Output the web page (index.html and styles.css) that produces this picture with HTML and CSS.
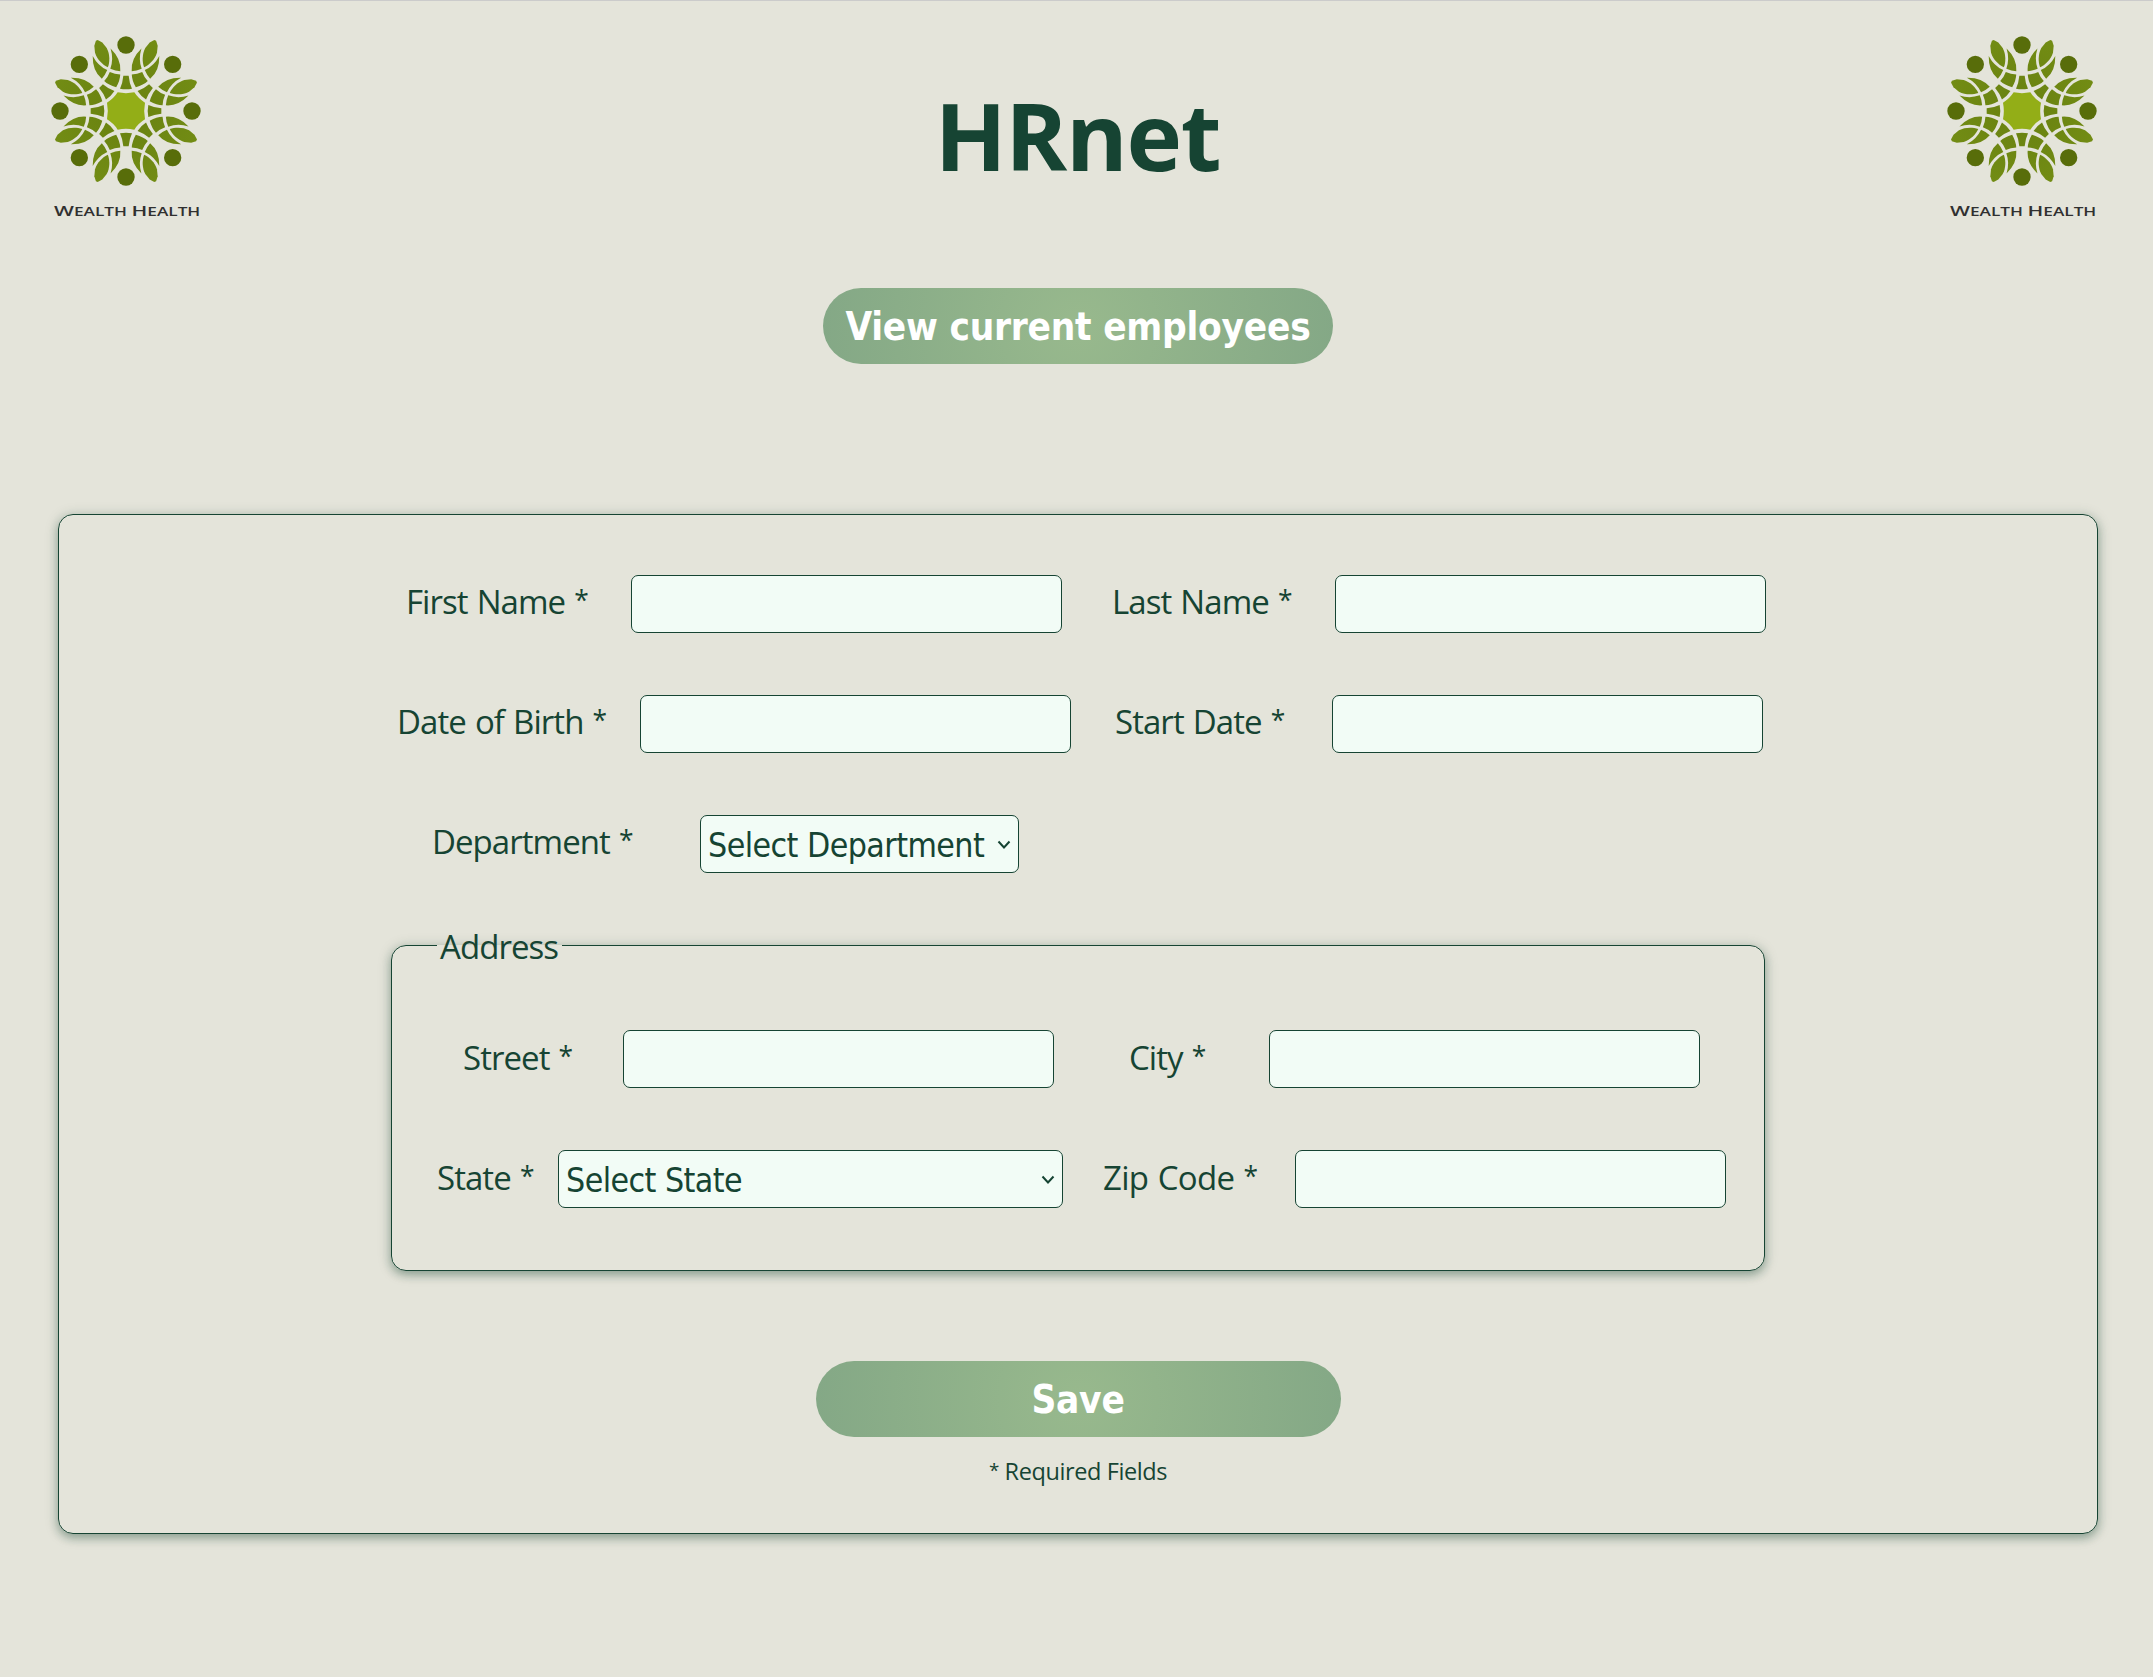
FILE: index.html
```html
<!DOCTYPE html>
<html lang="en">
<head>
<meta charset="utf-8">
<title>HRnet</title>
<link rel="stylesheet" href="styles.css">
</head>
<body>
<svg class="sprite" aria-hidden="true">
  <defs>
    <radialGradient id="leaf-fill" gradientUnits="userSpaceOnUse" cx="0" cy="0" r="230">
      <stop offset="0.3" stop-color="#6b8411"/>
      <stop offset="1" stop-color="#728c14"/>
    </radialGradient>
    <g id="sector">
      <circle cx="0" cy="-198" r="26" fill="#586d0a"/>
      <path d="M-8-106H8Q10-84 18-67Q0-63-18-67Q-10-84-8-106Z"/>
      <g transform="rotate(-22.5)">
        <path d="M0-142C12-155 21-176 19-197L13-217L3-229H-3L-13-217L-19-197C-21-176-12-155 0-142Z"/>
        <path d="M29-191Q26-158 5-135Q17-123 30-117Q47-150 29-191Z"/>
        <path d="M-29-191Q-26-158-5-135Q-17-123-30-117Q-47-150-29-191Z"/>
        <path d="M0-127Q11-115 26-108Q19-92 0-77Q-19-92-26-108Q-11-115 0-127Z"/>
      </g>
    </g>
    <symbol id="logo" viewBox="0 0 480 570">
      <g transform="translate(240 240)" fill="url(#leaf-fill)">
        <use href="#sector"/>
        <use href="#sector" transform="rotate(45)"/>
        <use href="#sector" transform="rotate(90)"/>
        <use href="#sector" transform="rotate(135)"/>
        <use href="#sector" transform="rotate(180)"/>
        <use href="#sector" transform="rotate(225)"/>
        <use href="#sector" transform="rotate(270)"/>
        <use href="#sector" transform="rotate(315)"/>
        <path fill="#93ae17" d="M-25-56Q0-51 25-56Q37-37 57-25Q52 0 57 25Q37 37 25 56Q0 51-25 56Q-37 37-57 25Q-52 0-57-25Q-37-37-25-56Z"/>
      </g>
      <text class="logo-text" x="24" y="554" textLength="439" lengthAdjust="spacingAndGlyphs"><tspan class="logo-cap">W</tspan>EALTH <tspan class="logo-cap">H</tspan>EALTH</text>
    </symbol>
  </defs>
</svg>

<header class="header">
  <svg class="logo" role="img" aria-label="Wealth Health"><use href="#logo"/></svg>
  <h1 class="title">HRnet</h1>
  <svg class="logo" role="img" aria-label="Wealth Health"><use href="#logo"/></svg>
</header>

<nav class="nav"><a class="button button-view">View current employees</a></nav>

<main class="panel">
  <form class="form">
    <div class="row">
      <label class="label first-name" for="first">First Name <span class="mark">*</span></label>
      <input class="control" id="first" type="text">
      <label class="label last-name" for="last">Last Name <span class="mark">*</span></label>
      <input class="control" id="last" type="text">
    </div>
    <div class="row">
      <label class="label birth" for="birth">Date of Birth <span class="mark">*</span></label>
      <input class="control" id="birth" type="text">
      <label class="label start" for="start">Start Date <span class="mark">*</span></label>
      <input class="control" id="start" type="text">
    </div>
    <div class="row">
      <label class="label department" for="department">Department <span class="mark">*</span></label>
      <select class="control select select-department" id="department"><option>Select Department</option></select>
    </div>
    <fieldset class="address">
      <legend class="legend">Address</legend>
      <div class="row">
        <label class="label street" for="street">Street <span class="mark">*</span></label>
        <input class="control" id="street" type="text">
        <label class="label city" for="city">City <span class="mark">*</span></label>
        <input class="control" id="city" type="text">
      </div>
      <div class="row">
        <label class="label state" for="state">State <span class="mark">*</span></label>
        <select class="control select select-state" id="state"><option>Select State</option></select>
        <label class="label zip" for="zip">Zip Code <span class="mark">*</span></label>
        <input class="control" id="zip" type="text">
      </div>
    </fieldset>
  </form>
  <button class="button button-save" type="button">Save</button>
  <p class="required"><span class="mark">*</span> Required Fields</p>
</main>
</body>
</html>
```
FILE: styles.css
```css
* {
  box-sizing: border-box;
}

body {
  margin: 0;
  min-height: 1677px;
  border-top: 1px solid #cbcbcb;
  background: #e4e4da;
  color: #164433;
  font-family: "Open Sans", "Noto Sans", sans-serif;
}

.sprite {
  position: absolute;
  width: 0;
  height: 0;
}

.header {
  display: flex;
  justify-content: space-between;
  height: 287px;
  padding: 30px 51px 0 46px;
}

.logo {
  width: 160px;
  height: 190px;
}

.logo-text {
  fill: #303030;
  font-family: "Open Sans", sans-serif;
  font-size: 36px;
  font-weight: 600;
}

.logo-cap {
  font-size: 44px;
}

.title {
  margin: 40px 0 0 7px;
  font-size: 94px;
  line-height: 128px;
  font-weight: 700;
  letter-spacing: -1.3px;
}

.nav {
  display: flex;
  justify-content: center;
  padding-left: 3px;
}

.button {
  display: block;
  height: 76px;
  border: 0;
  border-radius: 38px;
  background: radial-gradient(circle, #98b98d, #84a886);
  color: #fff;
  font-family: "DejaVu Sans Condensed", "DejaVu Sans", sans-serif;
  font-size: 38.4px;
  line-height: 78px;
  font-weight: 700;
  font-stretch: condensed;
  text-align: center;
  letter-spacing: -0.25px;
}

.button-view {
  width: 510px;
}

.button-save {
  width: 525px;
  margin: 90px auto 0;
  padding: 0;
}

.panel {
  width: 2040px;
  height: 1020px;
  margin: 150px 0 0 58px;
  padding-top: 60px;
  border: 1px solid #164433;
  border-radius: 15px;
  box-shadow: 0 4px 8px rgba(22, 68, 51, 0.3), 0 2px 14px rgba(22, 68, 51, 0.22);
}

.form {
  width: 1374px;
  margin-left: 332px;
}

.row {
  display: flex;
  align-items: flex-start;
  height: 58px;
  margin-bottom: 62px;
}

.label {
  flex: none;
  font-size: 33px;
  line-height: 53px;
  letter-spacing: -0.95px;
  word-spacing: 1.5px;
  white-space: nowrap;
}

.mark {
  font-size: 0.8em;
  line-height: 0;
  vertical-align: 0.15em;
}

.control {
  flex: none;
  width: 431px;
  height: 58px;
  border: 1px solid #164433;
  border-radius: 7px;
  background-color: #f2fcf6;
  color: #164433;
}

.select {
  padding: 3px 7px 0;
  appearance: none;
  background-image: url("data:image/svg+xml,%3Csvg xmlns='http://www.w3.org/2000/svg' width='14' height='10'%3E%3Cpath d='M1.5 1.5L7 7.500L12.500 1.500' fill='none' stroke='%23164433' stroke-width='2'/%3E%3C/svg%3E");
  background-repeat: no-repeat;
  background-position: right 7px top 24px;
  font-family: "DejaVu Sans Condensed", "DejaVu Sans", sans-serif;
  font-stretch: condensed;
  font-size: 33.6px;
  letter-spacing: -0.55px;
}

.select-department {
  width: 319px;
}

.select-state {
  width: 505px;
}

.first-name {
  width: 240px;
  padding-left: 15px;
}

.last-name {
  width: 273px;
  padding-left: 50px;
}

.birth {
  width: 249px;
  padding-left: 6px;
}

.start {
  width: 261px;
  padding-left: 44px;
}

.department {
  width: 309px;
  padding-left: 41px;
}

.address {
  height: 349px;
  min-width: 0;
  margin: -13px 0 0;
  padding: 62px 0 0 32px;
  border: 1px solid #164433;
  border-radius: 15px;
  box-shadow: 0 4px 8px rgba(22, 68, 51, 0.3), 0 2px 14px rgba(22, 68, 51, 0.22);
}

.legend {
  width: 125px;
  margin-left: 13px;
  padding: 4px 3px 0;
  font-size: 33px;
  line-height: 42px;
  letter-spacing: -0.95px;
}

.address .label {
  line-height: 55px;
}

.street {
  width: 199px;
  padding-left: 39px;
}

.city {
  width: 215px;
  padding-left: 75px;
}

.state {
  width: 134px;
  padding-left: 13px;
}

.zip {
  width: 232px;
  padding-left: 40px;
  letter-spacing: -0.7px;
}

.required {
  margin: 18px 0 0;
  font-size: 23.5px;
  line-height: 32px;
  text-align: center;
  letter-spacing: -0.4px;
}
```
